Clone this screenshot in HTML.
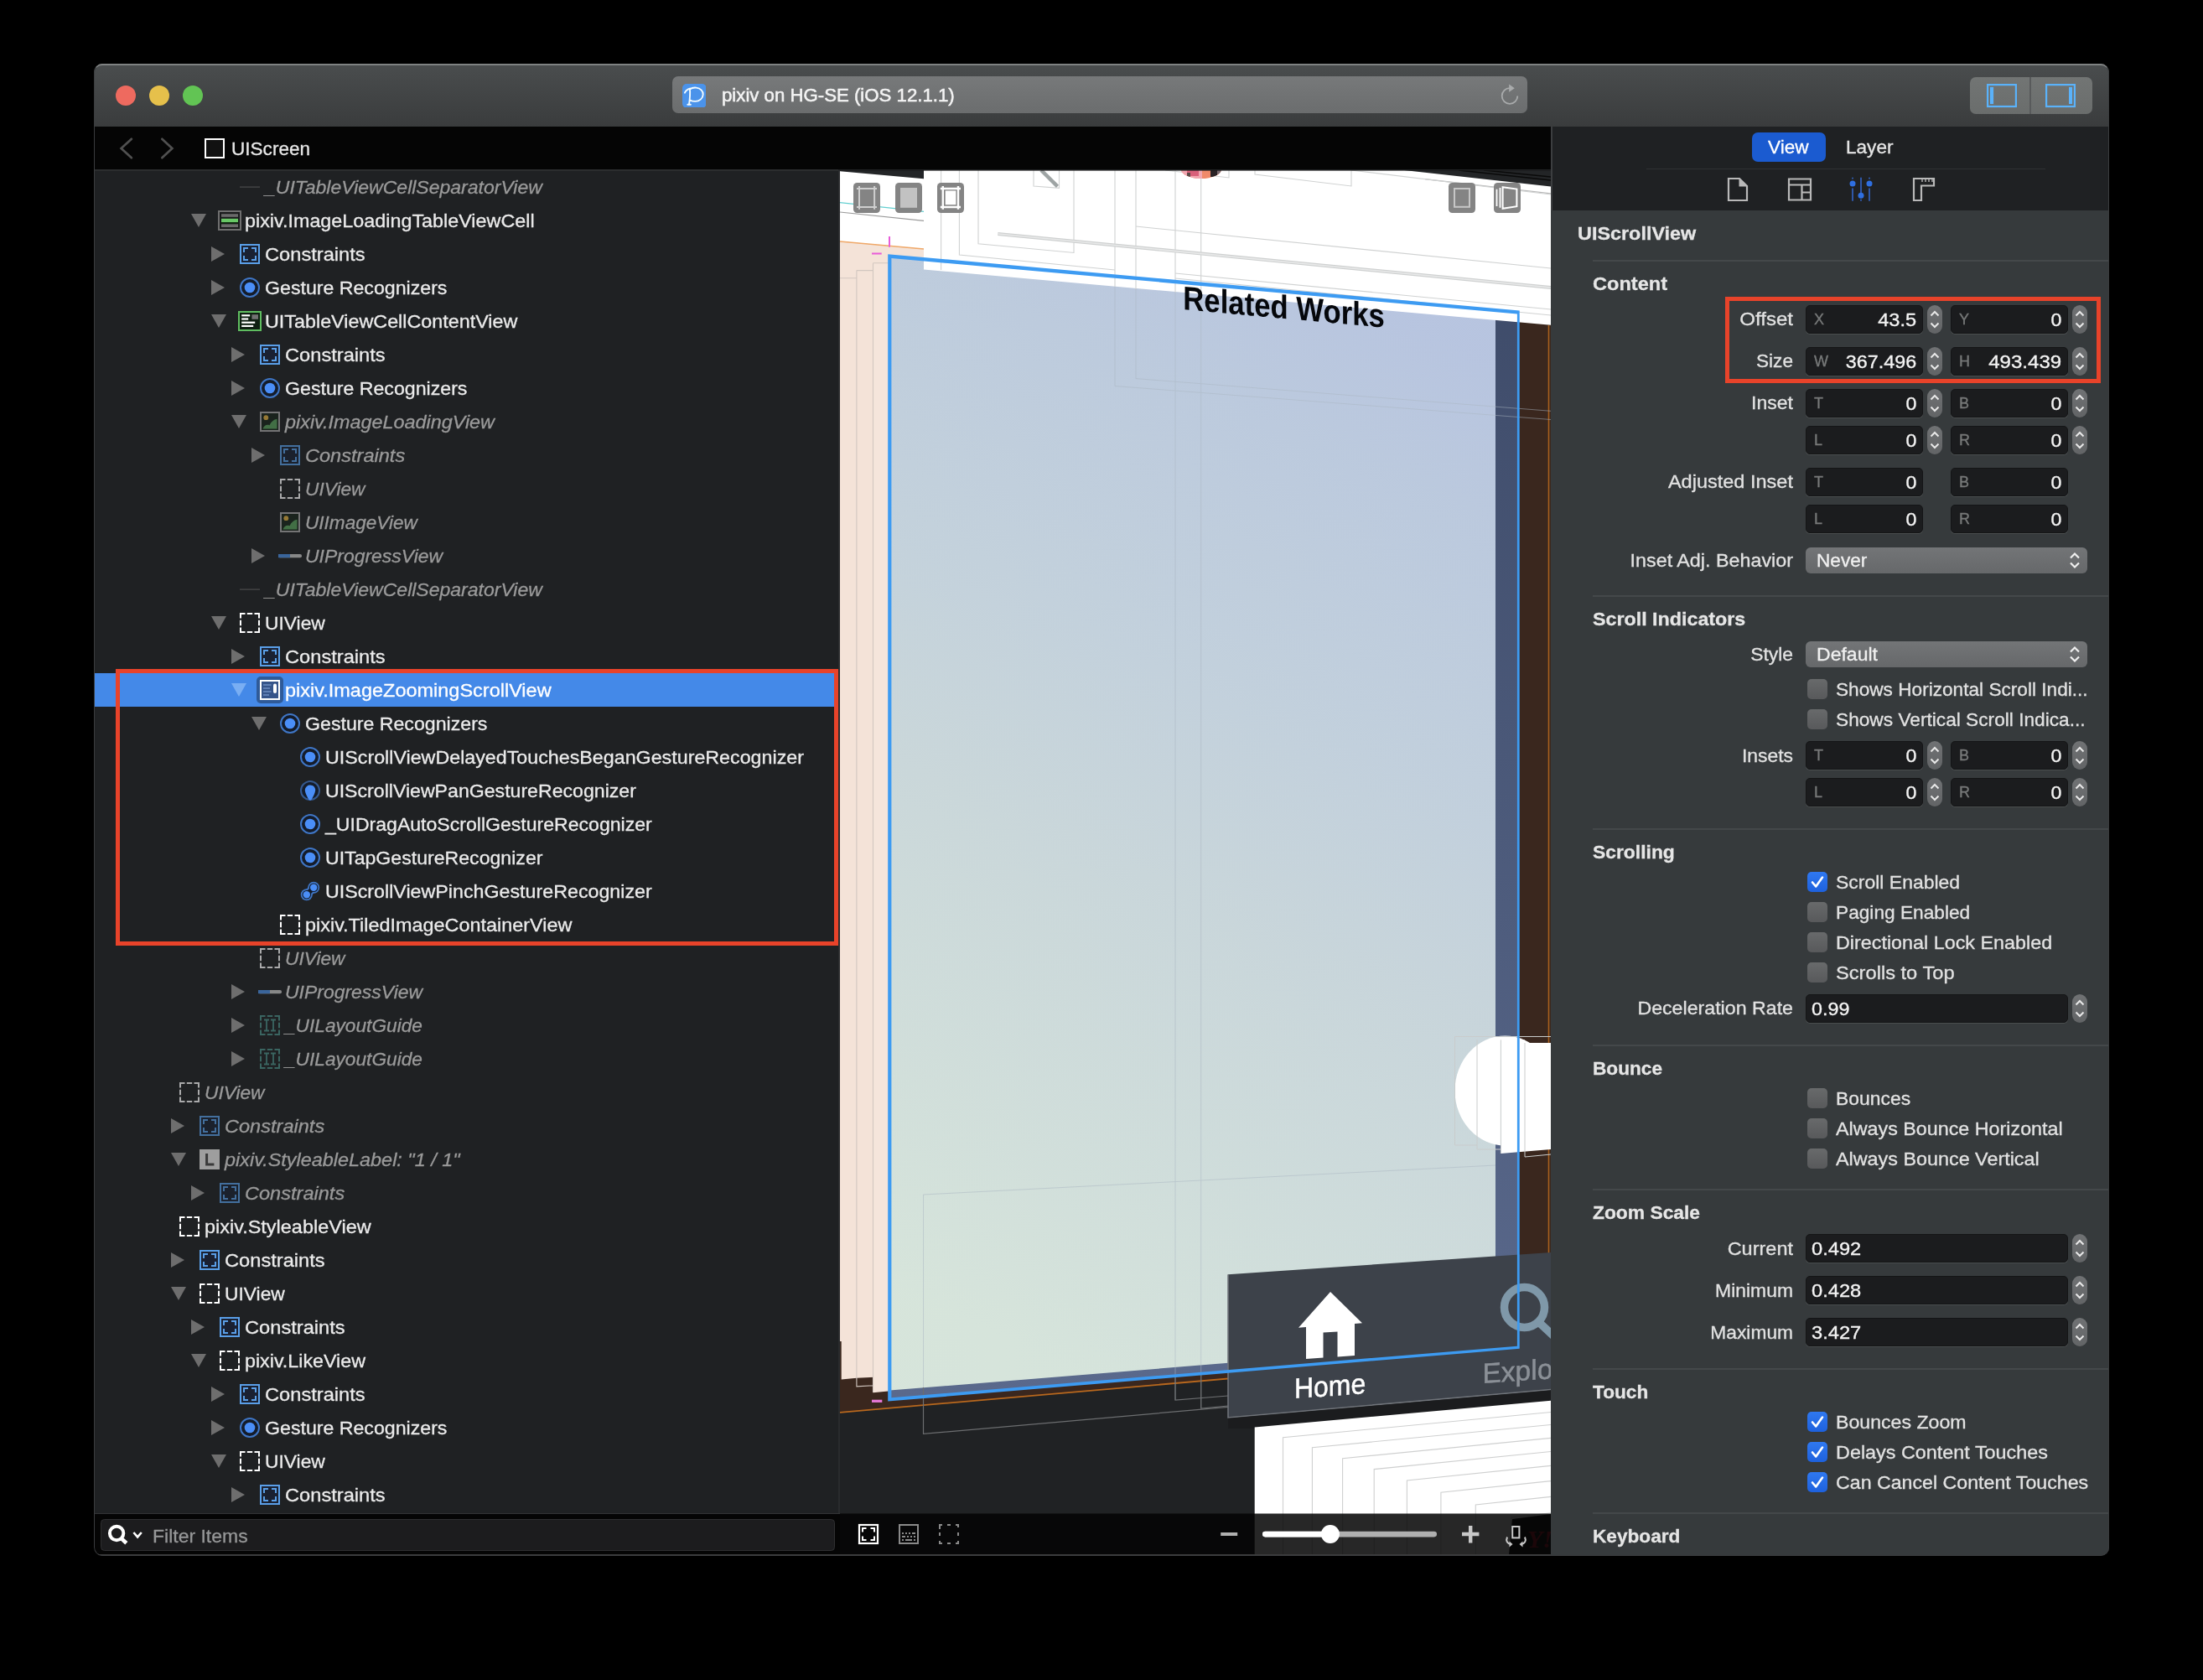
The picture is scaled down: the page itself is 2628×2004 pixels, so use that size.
<!DOCTYPE html><html><head><meta charset="utf-8"><title>Reveal</title><style>
*{box-sizing:border-box;margin:0;padding:0}
html,body{width:2628px;height:2004px;background:#000;overflow:hidden}
body{font-family:"Liberation Sans",sans-serif;font-size:22.2px;color:#ebebeb;position:relative;-webkit-text-stroke:0.3px currentColor}
.abs{position:absolute}
#win{will-change:transform;position:absolute;left:112px;top:76px;width:2404px;height:1780px;border-radius:10px;overflow:hidden;background:#1f2123}
#pg{position:absolute;left:-112px;top:-76px;width:2628px;height:2004px}
.t{position:absolute;white-space:nowrap;line-height:40px;height:40px;margin-top:0.6px;transform:scaleX(1.045);transform-origin:0 50%}
.row{position:absolute;left:112px;width:889px;height:40px}
.it{font-style:italic;color:#9a9a9a}
.b{font-weight:bold}
.fld{position:absolute;height:34px;background:#1b1c1e;border:1px solid #141516;border-radius:5px;box-shadow:0 1px 0 rgba(255,255,255,.10)}
.fld .k{position:absolute;left:9px;top:0;line-height:33px;font-size:18px;color:#777979;-webkit-text-stroke:0.35px #777979}
.fld .v{position:absolute;right:7px;top:0;line-height:34px;font-size:22.2px;color:#f4f4f4;-webkit-text-stroke:0.35px #f4f4f4;transform:scaleX(1.045);transform-origin:100% 50%}
.fld .vl{position:absolute;left:6px;top:0;line-height:34px;font-size:22.2px;color:#f4f4f4;-webkit-text-stroke:0.35px #f4f4f4;transform:scaleX(1.045);transform-origin:0 50%}
.stp{position:absolute;width:18px;height:34px;border-radius:9px;background:linear-gradient(#707274,#626466)}
.lbl{margin-top:0.6px;position:absolute;white-space:nowrap;text-align:right;line-height:34px;height:34px;color:#e2e2e2;transform:scaleX(1.045);transform-origin:100% 50%}
.hd{margin-top:0.6px;position:absolute;white-space:nowrap;font-weight:bold;line-height:34px;height:34px;color:#e6e6e6;left:1900px;transform:scaleX(1.045);transform-origin:0 50%}
.sep{position:absolute;left:1900px;width:616px;height:2px;background:#44484a}
.cb{position:absolute;width:24px;height:24px;border-radius:5px;background:linear-gradient(#686a6b,#58595b);left:2156px}
.cb.on{background:linear-gradient(#2f78f0,#1e61dd)}
.cbl{margin-top:0.6px;position:absolute;white-space:nowrap;line-height:34px;height:34px;left:2190px;color:#e2e2e2;transform:scaleX(1.045);transform-origin:0 50%}
.pop{position:absolute;left:2154px;width:336px;height:31px;border-radius:6px;background:linear-gradient(#737577,#66686a);}
.pop span{position:absolute;left:13px;top:0;line-height:31px;color:#f0f0f0;transform:scaleX(1.045);transform-origin:0 50%}
</style></head><body>
<div id="win"><div id="pg">
<div class="abs" style="left:112px;top:76px;width:2404px;height:75px;background:linear-gradient(#4a4d4e,#3a3c3d)"></div>
<div class="abs" style="left:112px;top:76px;width:2404px;height:2px;background:rgba(255,255,255,.22)"></div>
<div class="abs" style="left:138px;top:102px;width:24px;height:24px;border-radius:12px;background:#ee6a5f"></div>
<div class="abs" style="left:178px;top:102px;width:24px;height:24px;border-radius:12px;background:#e6c04b"></div>
<div class="abs" style="left:218px;top:102px;width:24px;height:24px;border-radius:12px;background:#62c454"></div>
<div class="abs" style="left:802px;top:91px;width:1020px;height:44px;border-radius:7px;background:linear-gradient(#77797a,#6b6d6e)"></div>
<svg class="abs" style="left:813.8px;top:99.6px" width="28.6" height="28.6" viewBox="0 0 28.6 28.6"><rect width="28.6" height="28.6" rx="5" fill="#4b93ea"/><path d="M2.9 10.7 C4.3 7.6 6.6 6.2 8.9 5.7 C9.3 10 9.0 18 8.0 24.6 M6.3 24.8 H9.9 M8.9 6.6 C11 4.9 14 4.3 16.6 4.6 C21.6 5.2 24.9 8.5 24.7 12.7 C24.5 17.5 20.2 20.9 15.5 20.9 C12.8 20.9 10.6 20.3 8.8 19.2" fill="none" stroke="#f2fbff" stroke-width="1.9" stroke-linecap="round"/></svg>
<div class="t" style="left:860.5px;top:93.6px;font-size:21.25px;color:#f4f4f4;-webkit-text-stroke:0.5px #f4f4f4">pixiv on HG-SE (iOS 12.1.1)</div>
<svg class="abs" style="left:1786px;top:99px" width="30" height="30" viewBox="0 0 30 30"><path d="M15 6.2 A9.3 9.3 0 1 0 24.3 15.5" fill="none" stroke="#a9abac" stroke-width="1.8"/><path d="M14.2 1.6 L20.8 6.2 L14.2 10.8 Z" fill="#a9abac"/></svg>
<div class="abs" style="left:2350px;top:92px;width:146px;height:44px;border-radius:7px;background:linear-gradient(#727574,#6a6d6c)"></div>
<div class="abs" style="left:2421px;top:92px;width:2px;height:44px;background:#585a5b"></div>
<svg class="abs" style="left:2369px;top:100px" width="38" height="30" viewBox="0 0 38 30"><rect x="2.100" y="1.100" width="33.800" height="25.900" fill="none" stroke="#5ab2fa" stroke-width="2.2"/><rect x="5" y="3.900" width="4.100" height="20.200" fill="#5ab2fa"/></svg>
<svg class="abs" style="left:2439px;top:100px" width="38" height="30" viewBox="0 0 38 30"><rect x="2.100" y="1.100" width="33.800" height="25.900" fill="none" stroke="#5ab2fa" stroke-width="2.2"/><rect x="29" y="3.900" width="4.100" height="20.200" fill="#5ab2fa"/></svg>
<div class="abs" style="left:112px;top:151px;width:1739px;height:51px;background:#050505"></div>
<svg class="abs" style="left:140px;top:160px" width="80" height="34" viewBox="0 0 80 34"><path d="M16.9 5.8 L4.6 17 L16.900 28.200" fill="none" stroke="#505050" stroke-width="2.7" stroke-linecap="round"/><path d="M53.3 5.8 L65.4 17 L53.300 28.200" fill="none" stroke="#505050" stroke-width="2.7" stroke-linecap="round"/></svg>
<div class="abs" style="left:244px;top:165px;width:24px;height:24px;border:2.5px solid #fff;background:#111"></div>
<div class="t" style="left:276px;top:157px;color:#e8e8e8;font-size:21.6px">UIScreen</div>
<div class="abs" style="left:112px;top:202px;width:890px;height:1604px;background:#1f2123"></div>
<div class="abs" style="left:112px;top:202px;width:888px;height:1.6px;background:#2c2e2f"></div>
<div class="abs" style="left:999.5px;top:203px;width:2.5px;height:1602px;background:#292b2d"></div>
<div class="abs" style="left:286px;top:211.0px;width:24px;height:24px"><svg width="24" height="24" viewBox="0 0 24 24" style="opacity:0.62"><rect x="0" y="11.400" width="24" height="1.400" fill="#5c5c5c"/></svg></div>
<div class="t it" style="left:315.6px;top:203px;transform:scaleX(1.0372)">_UITableViewCellSeparatorView</div>
<svg class="abs" style="left:228px;top:254.5px" width="18" height="16" viewBox="0 0 18 16"><path d="M0 0 H18 L9 16 Z" fill="#6e6e6e"/></svg>
<div class="abs" style="left:260px;top:251.0px;width:28px;height:24px"><svg width="28" height="24" viewBox="0 0 28 24"><rect x="1" y="1" width="26" height="22" fill="#1a1b1c" stroke="#6f6f6f" stroke-width="2"/><rect x="4" y="4.200" width="20" height="3.6" fill="#6a6a6a"/><rect x="4" y="9.800" width="20" height="4.4" fill="#68c766"/><rect x="4" y="14.200" width="20" height="1.400" fill="#0c2a0c"/><rect x="4" y="16.4" width="20" height="3.6" fill="#6a6a6a"/></svg></div>
<div class="t" style="left:291.6px;top:243px;transform:scaleX(1.0521)">pixiv.ImageLoadingTableViewCell</div>
<svg class="abs" style="left:252px;top:294px" width="16" height="18" viewBox="0 0 16 18"><path d="M0 0 L16 9 L0 18 Z" fill="#6e6e6e"/></svg>
<div class="abs" style="left:286px;top:291.0px;width:24px;height:24px"><svg width="24" height="24" viewBox="0 0 24 24" style="opacity:1"><rect x="1" y="1" width="22" height="22" fill="#1a2132" stroke="#5a9fe8" stroke-width="2"/><path d="M5 10 V5 H10 M14 5 H19 V10 M19 14 V19 H14 M10 19 H5 V14" fill="none" stroke="#5a9fe8" stroke-width="2"/></svg></div>
<div class="t" style="left:315.6px;top:283px;transform:scaleX(1.0665)">Constraints</div>
<svg class="abs" style="left:252px;top:334px" width="16" height="18" viewBox="0 0 16 18"><path d="M0 0 L16 9 L0 18 Z" fill="#6e6e6e"/></svg>
<div class="abs" style="left:286px;top:331.0px;width:24px;height:24px"><svg width="24" height="24" viewBox="0 0 24 24"><circle cx="12" cy="12" r="11" fill="#141c2a" stroke="#3f76c6" stroke-width="2"/><circle cx="12" cy="12" r="6.3" fill="#4a8ef7"/></svg></div>
<div class="t" style="left:315.6px;top:323px;transform:scaleX(1.0432)">Gesture Recognizers</div>
<svg class="abs" style="left:252px;top:374.5px" width="18" height="16" viewBox="0 0 18 16"><path d="M0 0 H18 L9 16 Z" fill="#6e6e6e"/></svg>
<div class="abs" style="left:284px;top:371.0px;width:28px;height:24px"><svg width="28" height="24" viewBox="0 0 28 24"><rect x="1" y="1" width="26" height="22" fill="#0f2012" stroke="#5fbd60" stroke-width="2"/><rect x="4.200" y="4.200" width="10" height="2.200" fill="#fff"/><rect x="4.200" y="8.400" width="8" height="2.200" fill="#fff"/><rect x="4.200" y="12.6" width="16" height="2.200" fill="#fff"/><rect x="4.200" y="16.8" width="14" height="2.200" fill="#fff"/><rect x="16.400" y="4.200" width="7.600" height="5.600" fill="#727272"/></svg></div>
<div class="t" style="left:315.6px;top:363px;transform:scaleX(1.0518)">UITableViewCellContentView</div>
<svg class="abs" style="left:276px;top:414px" width="16" height="18" viewBox="0 0 16 18"><path d="M0 0 L16 9 L0 18 Z" fill="#6e6e6e"/></svg>
<div class="abs" style="left:310px;top:411.0px;width:24px;height:24px"><svg width="24" height="24" viewBox="0 0 24 24" style="opacity:1"><rect x="1" y="1" width="22" height="22" fill="#1a2132" stroke="#5a9fe8" stroke-width="2"/><path d="M5 10 V5 H10 M14 5 H19 V10 M19 14 V19 H14 M10 19 H5 V14" fill="none" stroke="#5a9fe8" stroke-width="2"/></svg></div>
<div class="t" style="left:339.6px;top:403px;transform:scaleX(1.0665)">Constraints</div>
<svg class="abs" style="left:276px;top:454px" width="16" height="18" viewBox="0 0 16 18"><path d="M0 0 L16 9 L0 18 Z" fill="#6e6e6e"/></svg>
<div class="abs" style="left:310px;top:451.0px;width:24px;height:24px"><svg width="24" height="24" viewBox="0 0 24 24"><circle cx="12" cy="12" r="11" fill="#141c2a" stroke="#3f76c6" stroke-width="2"/><circle cx="12" cy="12" r="6.3" fill="#4a8ef7"/></svg></div>
<div class="t" style="left:339.6px;top:443px;transform:scaleX(1.0432)">Gesture Recognizers</div>
<svg class="abs" style="left:276px;top:494.5px" width="18" height="16" viewBox="0 0 18 16"><path d="M0 0 H18 L9 16 Z" fill="#6e6e6e"/></svg>
<div class="abs" style="left:310px;top:491.0px;width:24px;height:24px"><svg width="24" height="24" viewBox="0 0 24 24" style="opacity:0.62"><rect x="1" y="1" width="22" height="22" fill="#18251a" stroke="#a8a8a8" stroke-width="2"/><circle cx="7.3" cy="7.2" r="2.9" fill="#e0b040"/><path d="M3.5 20.5 C5 16.5 8 14.8 11.500 16.200 C13.5 12 16.5 9.5 20.5 8.8 V20.5 Z" fill="#58a05a"/></svg></div>
<div class="t it" style="left:339.6px;top:483px;transform:scaleX(1.0539)">pixiv.ImageLoadingView</div>
<svg class="abs" style="left:300px;top:534px" width="16" height="18" viewBox="0 0 16 18"><path d="M0 0 L16 9 L0 18 Z" fill="#6e6e6e"/></svg>
<div class="abs" style="left:334px;top:531.0px;width:24px;height:24px"><svg width="24" height="24" viewBox="0 0 24 24" style="opacity:0.62"><rect x="1" y="1" width="22" height="22" fill="#1a2132" stroke="#5a9fe8" stroke-width="2"/><path d="M5 10 V5 H10 M14 5 H19 V10 M19 14 V19 H14 M10 19 H5 V14" fill="none" stroke="#5a9fe8" stroke-width="2"/></svg></div>
<div class="t it" style="left:363.6px;top:523px;transform:scaleX(1.0621)">Constraints</div>
<div class="abs" style="left:334px;top:571.0px;width:24px;height:24px"><svg width="24" height="24" viewBox="0 0 24 24" style="opacity:0.62"><path d="M1 6.5 V1 H6.5 M8.800 1 H15.200 M17.500 1 H23 V6.500 M23 8.800 V15.200 M23 17.500 V23 H17.500 M15.200 23 H8.800 M6.500 23 H1 V17.500 M1 15.200 V8.800" fill="none" stroke="#fff" stroke-width="2"/></svg></div>
<div class="t it" style="left:363.6px;top:563px;transform:scaleX(1.0223)">UIView</div>
<div class="abs" style="left:334px;top:611.0px;width:24px;height:24px"><svg width="24" height="24" viewBox="0 0 24 24" style="opacity:0.62"><rect x="1" y="1" width="22" height="22" fill="#18251a" stroke="#a8a8a8" stroke-width="2"/><circle cx="7.3" cy="7.2" r="2.9" fill="#e0b040"/><path d="M3.5 20.5 C5 16.5 8 14.8 11.500 16.200 C13.5 12 16.5 9.5 20.5 8.8 V20.5 Z" fill="#58a05a"/></svg></div>
<div class="t it" style="left:363.6px;top:603px;transform:scaleX(1.0175)">UIImageView</div>
<svg class="abs" style="left:300px;top:654px" width="16" height="18" viewBox="0 0 16 18"><path d="M0 0 L16 9 L0 18 Z" fill="#6e6e6e"/></svg>
<div class="abs" style="left:332px;top:651.0px;width:28px;height:24px"><svg width="28" height="24" viewBox="0 0 28 24" style="opacity:0.85"><rect x="0" y="10" width="28" height="4.200" rx="2" fill="#9a9a9a"/><path d="M0 10 H14 V14.200 H0 Z" fill="#3f72b0"/></svg></div>
<div class="t it" style="left:363.6px;top:643px;transform:scaleX(1.0345)">UIProgressView</div>
<div class="abs" style="left:286px;top:691.0px;width:24px;height:24px"><svg width="24" height="24" viewBox="0 0 24 24" style="opacity:0.62"><rect x="0" y="11.400" width="24" height="1.400" fill="#5c5c5c"/></svg></div>
<div class="t it" style="left:315.6px;top:683px;transform:scaleX(1.0372)">_UITableViewCellSeparatorView</div>
<svg class="abs" style="left:252px;top:734.5px" width="18" height="16" viewBox="0 0 18 16"><path d="M0 0 H18 L9 16 Z" fill="#6e6e6e"/></svg>
<div class="abs" style="left:286px;top:731.0px;width:24px;height:24px"><svg width="24" height="24" viewBox="0 0 24 24" style="opacity:1"><path d="M1 6.5 V1 H6.5 M8.800 1 H15.200 M17.500 1 H23 V6.500 M23 8.800 V15.200 M23 17.500 V23 H17.500 M15.200 23 H8.800 M6.500 23 H1 V17.500 M1 15.200 V8.800" fill="none" stroke="#fff" stroke-width="2"/></svg></div>
<div class="t" style="left:315.6px;top:723px;transform:scaleX(1.0281)">UIView</div>
<svg class="abs" style="left:276px;top:774px" width="16" height="18" viewBox="0 0 16 18"><path d="M0 0 L16 9 L0 18 Z" fill="#6e6e6e"/></svg>
<div class="abs" style="left:310px;top:771.0px;width:24px;height:24px"><svg width="24" height="24" viewBox="0 0 24 24" style="opacity:1"><rect x="1" y="1" width="22" height="22" fill="#1a2132" stroke="#5a9fe8" stroke-width="2"/><path d="M5 10 V5 H10 M14 5 H19 V10 M19 14 V19 H14 M10 19 H5 V14" fill="none" stroke="#5a9fe8" stroke-width="2"/></svg></div>
<div class="t" style="left:339.6px;top:763px;transform:scaleX(1.0665)">Constraints</div>
<div class="abs" style="left:112px;top:803px;width:886px;height:40px;background:#4489e8"></div>
<svg class="abs" style="left:276px;top:814.5px" width="18" height="16" viewBox="0 0 18 16"><path d="M0 0 H18 L9 16 Z" fill="#79aef3"/></svg>
<div class="abs" style="left:306px;top:807.0px;width:32px;height:32px"><svg width="32" height="32" viewBox="0 0 32 32"><rect x="0" y="0" width="32" height="32" rx="5" fill="#2f5a98"/><rect x="5" y="5" width="22" height="22" fill="#35548a" stroke="#fff" stroke-width="2"/><rect x="8" y="9" width="9.5" height="2" fill="#5f7fb4"/><rect x="8" y="13" width="8" height="2" fill="#5f7fb4"/><rect x="8" y="17" width="9.5" height="2" fill="#5f7fb4"/><rect x="8" y="21" width="7" height="2" fill="#5f7fb4"/><rect x="20" y="8.500" width="4" height="11.500" rx="2" fill="#fff"/></svg></div>
<div class="t" style="left:339.6px;top:803px;color:#fff;transform:scaleX(1.0585)">pixiv.ImageZoomingScrollView</div>
<svg class="abs" style="left:300px;top:854.5px" width="18" height="16" viewBox="0 0 18 16"><path d="M0 0 H18 L9 16 Z" fill="#6e6e6e"/></svg>
<div class="abs" style="left:334px;top:851.0px;width:24px;height:24px"><svg width="24" height="24" viewBox="0 0 24 24"><circle cx="12" cy="12" r="11" fill="#141c2a" stroke="#3f76c6" stroke-width="2"/><circle cx="12" cy="12" r="6.3" fill="#4a8ef7"/></svg></div>
<div class="t" style="left:363.6px;top:843px;transform:scaleX(1.0432)">Gesture Recognizers</div>
<div class="abs" style="left:358px;top:891.0px;width:24px;height:24px"><svg width="24" height="24" viewBox="0 0 24 24"><circle cx="12" cy="12" r="11" fill="#141c2a" stroke="#3f76c6" stroke-width="2"/><circle cx="12" cy="12" r="6.3" fill="#4a8ef7"/></svg></div>
<div class="t" style="left:387.6px;top:883px;transform:scaleX(1.0482)">UIScrollViewDelayedTouchesBeganGestureRecognizer</div>
<div class="abs" style="left:358px;top:931.0px;width:24px;height:24px"><svg width="24" height="24" viewBox="0 0 24 24"><circle cx="12" cy="12" r="11" fill="#141c2a" stroke="#35598f" stroke-width="2"/><path d="M12 5.6 C16 5.6 18.4 8.6 18.2 11.8 C18 15 15.5 19.5 13.8 22.6 C13 24 11 24 10.2 22.6 C8.5 19.5 6 15 5.8 11.8 C5.6 8.6 8 5.6 12 5.6 Z" fill="#4a8ef7"/></svg></div>
<div class="t" style="left:387.6px;top:923px;transform:scaleX(1.0419)">UIScrollViewPanGestureRecognizer</div>
<div class="abs" style="left:358px;top:971.0px;width:24px;height:24px"><svg width="24" height="24" viewBox="0 0 24 24"><circle cx="12" cy="12" r="11" fill="#141c2a" stroke="#3f76c6" stroke-width="2"/><circle cx="12" cy="12" r="6.3" fill="#4a8ef7"/></svg></div>
<div class="t" style="left:387.6px;top:963px;transform:scaleX(1.0397)">_UIDragAutoScrollGestureRecognizer</div>
<div class="abs" style="left:358px;top:1011.0px;width:24px;height:24px"><svg width="24" height="24" viewBox="0 0 24 24"><circle cx="12" cy="12" r="11" fill="#141c2a" stroke="#3f76c6" stroke-width="2"/><circle cx="12" cy="12" r="6.3" fill="#4a8ef7"/></svg></div>
<div class="t" style="left:387.6px;top:1003px;transform:scaleX(1.0415)">UITapGestureRecognizer</div>
<div class="abs" style="left:358px;top:1051.0px;width:24px;height:24px"><svg width="24" height="24" viewBox="0 0 24 24"><circle cx="16.2" cy="7.8" r="7" fill="#3f76c6"/><circle cx="7.8" cy="16.2" r="7" fill="#3f76c6"/><path d="M16.2 7.8 L7.8 16.2" stroke="#3f76c6" stroke-width="9.6"/><circle cx="16.2" cy="7.8" r="5.3" fill="#141c2a"/><circle cx="7.8" cy="16.2" r="5.3" fill="#141c2a"/><path d="M16.2 7.8 L7.8 16.2" stroke="#141c2a" stroke-width="5.6"/><circle cx="16.2" cy="7.8" r="4.2" fill="#4a8ef7"/><circle cx="7.8" cy="16.200" r="4.2" fill="#4a8ef7"/></svg></div>
<div class="t" style="left:387.6px;top:1043px;transform:scaleX(1.0477)">UIScrollViewPinchGestureRecognizer</div>
<div class="abs" style="left:334px;top:1091.0px;width:24px;height:24px"><svg width="24" height="24" viewBox="0 0 24 24" style="opacity:1"><path d="M1 6.5 V1 H6.5 M8.800 1 H15.200 M17.500 1 H23 V6.500 M23 8.800 V15.200 M23 17.500 V23 H17.500 M15.200 23 H8.800 M6.500 23 H1 V17.500 M1 15.200 V8.800" fill="none" stroke="#fff" stroke-width="2"/></svg></div>
<div class="t" style="left:363.6px;top:1083px;transform:scaleX(1.0553)">pixiv.TiledImageContainerView</div>
<div class="abs" style="left:310px;top:1131.0px;width:24px;height:24px"><svg width="24" height="24" viewBox="0 0 24 24" style="opacity:0.62"><path d="M1 6.5 V1 H6.5 M8.800 1 H15.200 M17.500 1 H23 V6.500 M23 8.800 V15.200 M23 17.500 V23 H17.500 M15.200 23 H8.800 M6.500 23 H1 V17.500 M1 15.200 V8.800" fill="none" stroke="#fff" stroke-width="2"/></svg></div>
<div class="t it" style="left:339.6px;top:1123px;transform:scaleX(1.0223)">UIView</div>
<svg class="abs" style="left:276px;top:1174px" width="16" height="18" viewBox="0 0 16 18"><path d="M0 0 L16 9 L0 18 Z" fill="#6e6e6e"/></svg>
<div class="abs" style="left:308px;top:1171.0px;width:28px;height:24px"><svg width="28" height="24" viewBox="0 0 28 24" style="opacity:0.85"><rect x="0" y="10" width="28" height="4.200" rx="2" fill="#9a9a9a"/><path d="M0 10 H14 V14.200 H0 Z" fill="#3f72b0"/></svg></div>
<div class="t it" style="left:339.6px;top:1163px;transform:scaleX(1.0345)">UIProgressView</div>
<svg class="abs" style="left:276px;top:1214px" width="16" height="18" viewBox="0 0 16 18"><path d="M0 0 L16 9 L0 18 Z" fill="#6e6e6e"/></svg>
<div class="abs" style="left:310px;top:1211.0px;width:24px;height:24px"><svg width="24" height="24" viewBox="0 0 24 24" style="opacity:0.62"><path d="M1 6.5 V1 H6.5 M8.800 1 H15.200 M17.500 1 H23 V6.500 M23 8.800 V15.200 M23 17.500 V23 H17.500 M15.200 23 H8.800 M6.500 23 H1 V17.500 M1 15.200 V8.800" fill="none" stroke="#4c8f88" stroke-width="2"/><path d="M5 5.500 H11 M8 5.500 V18.500 M5 18.500 H11 M13 5.500 H19 M16 5.500 V18.500 M13 18.500 H19" fill="none" stroke="#4c8f88" stroke-width="1.800"/></svg></div>
<div class="t it" style="left:339.6px;top:1203px;transform:scaleX(1.0224)">_UILayoutGuide</div>
<svg class="abs" style="left:276px;top:1254px" width="16" height="18" viewBox="0 0 16 18"><path d="M0 0 L16 9 L0 18 Z" fill="#6e6e6e"/></svg>
<div class="abs" style="left:310px;top:1251.0px;width:24px;height:24px"><svg width="24" height="24" viewBox="0 0 24 24" style="opacity:0.62"><path d="M1 6.5 V1 H6.5 M8.800 1 H15.200 M17.500 1 H23 V6.500 M23 8.800 V15.200 M23 17.500 V23 H17.500 M15.200 23 H8.800 M6.500 23 H1 V17.500 M1 15.200 V8.800" fill="none" stroke="#4c8f88" stroke-width="2"/><path d="M5 5.500 H11 M8 5.500 V18.500 M5 18.500 H11 M13 5.500 H19 M16 5.500 V18.500 M13 18.500 H19" fill="none" stroke="#4c8f88" stroke-width="1.800"/></svg></div>
<div class="t it" style="left:339.6px;top:1243px;transform:scaleX(1.0224)">_UILayoutGuide</div>
<div class="abs" style="left:214px;top:1291.0px;width:24px;height:24px"><svg width="24" height="24" viewBox="0 0 24 24" style="opacity:0.62"><path d="M1 6.5 V1 H6.5 M8.800 1 H15.200 M17.500 1 H23 V6.500 M23 8.800 V15.200 M23 17.500 V23 H17.500 M15.200 23 H8.800 M6.500 23 H1 V17.500 M1 15.200 V8.800" fill="none" stroke="#fff" stroke-width="2"/></svg></div>
<div class="t it" style="left:243.60000000000002px;top:1283px;transform:scaleX(1.0223)">UIView</div>
<svg class="abs" style="left:204px;top:1334px" width="16" height="18" viewBox="0 0 16 18"><path d="M0 0 L16 9 L0 18 Z" fill="#6e6e6e"/></svg>
<div class="abs" style="left:238px;top:1331.0px;width:24px;height:24px"><svg width="24" height="24" viewBox="0 0 24 24" style="opacity:0.62"><rect x="1" y="1" width="22" height="22" fill="#1a2132" stroke="#5a9fe8" stroke-width="2"/><path d="M5 10 V5 H10 M14 5 H19 V10 M19 14 V19 H14 M10 19 H5 V14" fill="none" stroke="#5a9fe8" stroke-width="2"/></svg></div>
<div class="t it" style="left:267.6px;top:1323px;transform:scaleX(1.0621)">Constraints</div>
<svg class="abs" style="left:204px;top:1374.5px" width="18" height="16" viewBox="0 0 18 16"><path d="M0 0 H18 L9 16 Z" fill="#6e6e6e"/></svg>
<div class="abs" style="left:238px;top:1371.0px;width:24px;height:24px"><svg width="24" height="24" viewBox="0 0 24 24" style="opacity:1"><rect width="24" height="24" fill="#9e9e9e"/><path d="M8.600 5 V18 H17.400" fill="none" stroke="#3a3a3a" stroke-width="3"/></svg></div>
<div class="t it" style="left:267.6px;top:1363px;transform:scaleX(1.0560)">pixiv.StyleableLabel: "1 / 1"</div>
<svg class="abs" style="left:228px;top:1414px" width="16" height="18" viewBox="0 0 16 18"><path d="M0 0 L16 9 L0 18 Z" fill="#6e6e6e"/></svg>
<div class="abs" style="left:262px;top:1411.0px;width:24px;height:24px"><svg width="24" height="24" viewBox="0 0 24 24" style="opacity:0.62"><rect x="1" y="1" width="22" height="22" fill="#1a2132" stroke="#5a9fe8" stroke-width="2"/><path d="M5 10 V5 H10 M14 5 H19 V10 M19 14 V19 H14 M10 19 H5 V14" fill="none" stroke="#5a9fe8" stroke-width="2"/></svg></div>
<div class="t it" style="left:291.6px;top:1403px;transform:scaleX(1.0621)">Constraints</div>
<div class="abs" style="left:214px;top:1451.0px;width:24px;height:24px"><svg width="24" height="24" viewBox="0 0 24 24" style="opacity:1"><path d="M1 6.5 V1 H6.5 M8.800 1 H15.200 M17.500 1 H23 V6.500 M23 8.800 V15.200 M23 17.500 V23 H17.500 M15.200 23 H8.800 M6.500 23 H1 V17.500 M1 15.200 V8.800" fill="none" stroke="#fff" stroke-width="2"/></svg></div>
<div class="t" style="left:243.60000000000002px;top:1443px;transform:scaleX(1.0573)">pixiv.StyleableView</div>
<svg class="abs" style="left:204px;top:1494px" width="16" height="18" viewBox="0 0 16 18"><path d="M0 0 L16 9 L0 18 Z" fill="#6e6e6e"/></svg>
<div class="abs" style="left:238px;top:1491.0px;width:24px;height:24px"><svg width="24" height="24" viewBox="0 0 24 24" style="opacity:1"><rect x="1" y="1" width="22" height="22" fill="#1a2132" stroke="#5a9fe8" stroke-width="2"/><path d="M5 10 V5 H10 M14 5 H19 V10 M19 14 V19 H14 M10 19 H5 V14" fill="none" stroke="#5a9fe8" stroke-width="2"/></svg></div>
<div class="t" style="left:267.6px;top:1483px;transform:scaleX(1.0665)">Constraints</div>
<svg class="abs" style="left:204px;top:1534.5px" width="18" height="16" viewBox="0 0 18 16"><path d="M0 0 H18 L9 16 Z" fill="#6e6e6e"/></svg>
<div class="abs" style="left:238px;top:1531.0px;width:24px;height:24px"><svg width="24" height="24" viewBox="0 0 24 24" style="opacity:1"><path d="M1 6.5 V1 H6.5 M8.800 1 H15.200 M17.500 1 H23 V6.500 M23 8.800 V15.200 M23 17.500 V23 H17.500 M15.200 23 H8.800 M6.500 23 H1 V17.500 M1 15.200 V8.800" fill="none" stroke="#fff" stroke-width="2"/></svg></div>
<div class="t" style="left:267.6px;top:1523px;transform:scaleX(1.0281)">UIView</div>
<svg class="abs" style="left:228px;top:1574px" width="16" height="18" viewBox="0 0 16 18"><path d="M0 0 L16 9 L0 18 Z" fill="#6e6e6e"/></svg>
<div class="abs" style="left:262px;top:1571.0px;width:24px;height:24px"><svg width="24" height="24" viewBox="0 0 24 24" style="opacity:1"><rect x="1" y="1" width="22" height="22" fill="#1a2132" stroke="#5a9fe8" stroke-width="2"/><path d="M5 10 V5 H10 M14 5 H19 V10 M19 14 V19 H14 M10 19 H5 V14" fill="none" stroke="#5a9fe8" stroke-width="2"/></svg></div>
<div class="t" style="left:291.6px;top:1563px;transform:scaleX(1.0665)">Constraints</div>
<svg class="abs" style="left:228px;top:1614.5px" width="18" height="16" viewBox="0 0 18 16"><path d="M0 0 H18 L9 16 Z" fill="#6e6e6e"/></svg>
<div class="abs" style="left:262px;top:1611.0px;width:24px;height:24px"><svg width="24" height="24" viewBox="0 0 24 24" style="opacity:1"><path d="M1 6.5 V1 H6.5 M8.800 1 H15.200 M17.500 1 H23 V6.500 M23 8.800 V15.200 M23 17.500 V23 H17.500 M15.200 23 H8.800 M6.500 23 H1 V17.500 M1 15.200 V8.800" fill="none" stroke="#fff" stroke-width="2"/></svg></div>
<div class="t" style="left:291.6px;top:1603px;transform:scaleX(1.0486)">pixiv.LikeView</div>
<svg class="abs" style="left:252px;top:1654px" width="16" height="18" viewBox="0 0 16 18"><path d="M0 0 L16 9 L0 18 Z" fill="#6e6e6e"/></svg>
<div class="abs" style="left:286px;top:1651.0px;width:24px;height:24px"><svg width="24" height="24" viewBox="0 0 24 24" style="opacity:1"><rect x="1" y="1" width="22" height="22" fill="#1a2132" stroke="#5a9fe8" stroke-width="2"/><path d="M5 10 V5 H10 M14 5 H19 V10 M19 14 V19 H14 M10 19 H5 V14" fill="none" stroke="#5a9fe8" stroke-width="2"/></svg></div>
<div class="t" style="left:315.6px;top:1643px;transform:scaleX(1.0665)">Constraints</div>
<svg class="abs" style="left:252px;top:1694px" width="16" height="18" viewBox="0 0 16 18"><path d="M0 0 L16 9 L0 18 Z" fill="#6e6e6e"/></svg>
<div class="abs" style="left:286px;top:1691.0px;width:24px;height:24px"><svg width="24" height="24" viewBox="0 0 24 24"><circle cx="12" cy="12" r="11" fill="#141c2a" stroke="#3f76c6" stroke-width="2"/><circle cx="12" cy="12" r="6.3" fill="#4a8ef7"/></svg></div>
<div class="t" style="left:315.6px;top:1683px;transform:scaleX(1.0432)">Gesture Recognizers</div>
<svg class="abs" style="left:252px;top:1734.5px" width="18" height="16" viewBox="0 0 18 16"><path d="M0 0 H18 L9 16 Z" fill="#6e6e6e"/></svg>
<div class="abs" style="left:286px;top:1731.0px;width:24px;height:24px"><svg width="24" height="24" viewBox="0 0 24 24" style="opacity:1"><path d="M1 6.5 V1 H6.5 M8.800 1 H15.200 M17.500 1 H23 V6.500 M23 8.800 V15.200 M23 17.500 V23 H17.500 M15.200 23 H8.800 M6.500 23 H1 V17.500 M1 15.200 V8.800" fill="none" stroke="#fff" stroke-width="2"/></svg></div>
<div class="t" style="left:315.6px;top:1723px;transform:scaleX(1.0281)">UIView</div>
<svg class="abs" style="left:276px;top:1774px" width="16" height="18" viewBox="0 0 16 18"><path d="M0 0 L16 9 L0 18 Z" fill="#6e6e6e"/></svg>
<div class="abs" style="left:310px;top:1771.0px;width:24px;height:24px"><svg width="24" height="24" viewBox="0 0 24 24" style="opacity:1"><rect x="1" y="1" width="22" height="22" fill="#1a2132" stroke="#5a9fe8" stroke-width="2"/><path d="M5 10 V5 H10 M14 5 H19 V10 M19 14 V19 H14 M10 19 H5 V14" fill="none" stroke="#5a9fe8" stroke-width="2"/></svg></div>
<div class="t" style="left:339.6px;top:1763px;transform:scaleX(1.0665)">Constraints</div>
<div class="abs" style="left:137.8px;top:798.4px;width:861.9px;height:330.1px;border:5.7px solid #e8432a"></div>
<div class="abs" style="left:112px;top:1805.5px;width:890px;height:50px;background:#050505"></div>
<div class="abs" style="left:112px;top:1854px;width:890px;height:1.5px;background:#3c3c3c"></div>
<div class="abs" style="left:120px;top:1812px;width:876px;height:38px;background:#1c1c1e;border:1.5px solid #2f2f31;border-radius:4.5px"></div>
<svg class="abs" style="left:128px;top:1817px" width="52" height="30" viewBox="0 0 52 30"><circle cx="11.1" cy="12" r="8.2" fill="none" stroke="#fff" stroke-width="4"/><path d="M17 18.400 L22.800 23.800" stroke="#fff" stroke-width="4.6" stroke-linecap="butt"/><path d="M31.4 11 L36.1 16.4 L40.800 11" fill="none" stroke="#fff" stroke-width="2.6"/></svg>
<div class="t" style="left:182px;top:1812.6px;color:#969798;font-size:22px">Filter Items</div>
<div class="abs" style="left:112px;top:1804.500px;width:890px;height:1.500px;background:#323436"></div>
<svg class="abs" style="left:1002px;top:203px" width="848" height="1652" viewBox="1002 203 848 1652" font-family="Liberation Sans, sans-serif">
<defs><linearGradient id="gfill" x1="0.62" y1="0" x2="0.38" y2="1"><stop offset="0" stop-color="#b8c5df"/><stop offset="0.14" stop-color="#bccadd"/><stop offset="0.36" stop-color="#c2d0dc"/><stop offset="0.56" stop-color="#c9d6da"/><stop offset="1" stop-color="#d6e4db"/></linearGradient><linearGradient id="gh" x1="0" y1="0" x2="1" y2="0"><stop offset="0" stop-color="#dfeed6" stop-opacity="0.05"/><stop offset="1" stop-color="#a8b8f0" stop-opacity="0.04"/></linearGradient><linearGradient id="gdb" x1="0" y1="0" x2="0" y2="1"><stop offset="0" stop-color="#3e4b69"/><stop offset="1" stop-color="#5a698c"/></linearGradient><clipPath id="cv"><rect x="1002" y="203" width="848" height="1652"/></clipPath></defs>
<g clip-path="url(#cv)">
<rect x="1002" y="203" width="848" height="1652" fill="#202224"/>
<polygon points="1002,203 1102,203 1102,297 1002,288" fill="#fff"/>
<polygon points="1002,203 1102,203 1102,213.3 1002,204.3" fill="#232527"/>
<line x1="1002" y1="241.6" x2="1102" y2="252.3" stroke="#62cfd0" stroke-width="1.2"/>
<line x1="1002" y1="253" x2="1102" y2="263.4" stroke="#9a9a9a" stroke-width="1.2"/>
<polygon points="1002,288 1850,367 1850,1611 1002,1684.800" fill="#3a271e"/>
<polygon points="1002,288 1102,297 1102,1640 1021.9,1643.700 1003.700,1645.500 1003.700,1600 1002,1600" fill="#f4e3d8"/>
<polygon points="1021.900,322.600 1041.500,322.600 1041.500,1641.700 1021.900,1642.900" fill="#f4e3d8"/>
<polygon points="1041.500,313.800 1062,313.800 1062,1659.300 1041.500,1661.300" fill="#f5e5db"/>
<path d="M1002 331.700 H1021.900 M1021.900 322.600 V1653.900 L1041.500 1652.700 M1021.900 322.600 H1041.500 M1041.500 313.800 V1661 M1041.500 313.800 H1060" fill="none" stroke="#d2c7c0" stroke-width="1.100"/>
<line x1="1002" y1="288" x2="1102" y2="297" stroke="#f0a868" stroke-width="1.600"/>
<line x1="1002" y1="1684.800" x2="1850" y2="1611" stroke="#b8681e" stroke-width="1.800"/>
<line x1="1847.5" y1="388" x2="1847.5" y2="1500" stroke="#a8601f" stroke-width="1.6"/>
<polygon points="1061.300,305.300 1811.300,372.100 1811.300,1607.200 1061.100,1669.500" fill="url(#gdb)"/>
<polygon points="1061.300,305.300 1784,369.700 1784,1600 1061.300,1658.600" fill="url(#gfill)"/>
<polygon points="1061.300,305.300 1784,369.700 1784,1600 1061.300,1658.600" fill="url(#gh)"/>
<g fill="none" stroke="#aab6c2" stroke-width="1" opacity="0.5">
<path d="M1402 340 V1670 M1432.7 340 V1680"/>
<path d="M1330 330 V460.500 L1850 500.500 M1355 330 V451.600 L1850 490.300"/>
<path d="M1101.5 1425 L1784 1390 M1101.5 1425 V1660"/>
</g>
<g fill="none" stroke="#6c6e70" stroke-width="1.2">
<path d="M1101.5 1655 V1710.4 L1465 1678.4"/>
<path d="M1402 1640 V1670.2 L1465 1665"/>
<path d="M1432.7 1640 V1680 L1465 1677"/>
</g>
<polygon points="1102,203 1850,203 1850,387.7 1102,321.4" fill="#fff"/>
<polygon points="1675,203 1850,203 1850,222.400" fill="#232527"/><path d="M1700 213.700 L1850 230.800" stroke="#b8b8b8" stroke-width="1.300"/><path d="M1740 203 L1850 215 M1770 203 L1850 211" stroke="#0a0a0a" stroke-width="1.500"/>
<g fill="none" stroke="#d0d2d2" stroke-width="1.1">
<path d="M1122.6 203 V322 M1144.4 203 V304 L1330 322 M1167 203 V290.8 L1281 301.5 V203"/>
<path d="M1233 203 V222 L1263.5 224.4 V203"/>
<path d="M1330 203 V342 M1355 203 V345 M1402 203 V349 M1432.7 203 V352"/>
<path d="M1355 270 L1850 320"/>
<path d="M1402 326 L1850 369 M1402 332 L1850 376"/>
<path d="M1390 203 L1466 212 V203 M1497 203 V208 L1612 222 V203 M1612 203 L1850 232"/>
</g>
<line x1="1190.3" y1="279" x2="1850" y2="343" stroke="#cfd1d1" stroke-width="4"/>
<line x1="1190.3" y1="279" x2="1850" y2="343" stroke="#e8e9e9" stroke-width="1.6"/>
<line x1="1242" y1="203" x2="1261.5" y2="222.4" stroke="#9ea4a4" stroke-width="4.5"/>
<clipPath id="av"><ellipse cx="1433" cy="202" rx="24" ry="11"/></clipPath>
<g clip-path="url(#av)"><rect x="1405" y="200" width="60" height="20" fill="#f08a6a"/><rect x="1405" y="200" width="29" height="20" fill="#f2a6b0"/><rect x="1416" y="203" width="14" height="7" fill="#d9607a"/><rect x="1444" y="200" width="8" height="11" fill="#2a2326"/><rect x="1452" y="200" width="8" height="8" fill="#7a6a70"/><rect x="1416" y="206" width="4" height="6" fill="#5a4a48"/></g>
<text transform="matrix(0.879 0.0791 0 1 1411.300 369.100)" font-size="39.5" font-weight="bold" fill="#05070b">Related Works</text>
<ellipse cx="1795.500" cy="1301" rx="60" ry="65.500" fill="#fff"/>
<polygon points="1790.4,1240.4 1819,1240.4 1819,1244 1850,1244 1850,1371 1790.4,1376" fill="#fff"/>
<g fill="none" stroke="#c9cccc" stroke-width="1"><path d="M1735.500 1236.500 H1850 M1735.500 1236.500 V1366 H1762 M1762 1240 V1371 H1790 M1790.400 1240.400 V1376 M1819 1244 V1380 L1850 1377"/></g>
<polygon points="1465,1520.3 1850,1494 1850,1657.5 1465,1691" fill="#3d424a"/>
<path d="M1465 1520.3 V1691 L1850 1657.5" fill="none" stroke="#70747a" stroke-width="1.6"/>
<g transform="matrix(1 -0.07 0 1 1587 1541)"><path d="M0 0 L38 40 H29 V78 H8.5 V48 H-8.5 V78 H-29 V40 H-38 Z" fill="#fff"/></g>
<text transform="matrix(0.94 -0.066 0 1 1544 1668)" font-size="34" fill="#fff" stroke="#fff" stroke-width="0.500">Home</text>
<text transform="matrix(1 -0.07 0 1 1768.500 1650)" font-size="33.500" fill="#8b9097" stroke="#8b9097" stroke-width="0.500">Explore</text>
<circle cx="1818.500" cy="1559.500" r="24" fill="none" stroke="#7f98a9" stroke-width="9.500"/>
<line x1="1835.500" y1="1577" x2="1856" y2="1596" stroke="#7f98a9" stroke-width="9.500"/>
<polygon points="1465,1692 1850,1658.500 1850,1672 1497.600,1704 1465,1704" fill="#1b1c1e"/>
<polygon points="1496.700,1702.600 1850,1670.700 1850,1855 1496.700,1855" fill="#fff"/>
<g fill="none" stroke="#cfd0d0" stroke-width="1.1">
<path d="M1530.5 1855 V1714.7 L1850 1684.5"/>
<path d="M1565.4 1855 V1726.8 L1850 1699.5"/>
<path d="M1601.6 1855 V1739.7 L1850 1715.4"/>
<path d="M1639.2 1855 V1752.6 L1850 1731.5"/>
<path d="M1678.4 1855 V1765.9 L1850 1748.4"/>
<path d="M1718.9 1855 V1780.2 L1850 1766.6"/>
<path d="M1760.3 1855 V1794.9 L1850 1785.4"/>
<path d="M1803.0 1855 V1810.0 L1850 1804.9"/>
</g>
<path fill-rule="evenodd" fill="#3d9bf2" d="M1059.200 303.200 L1812.700 370.600 L1812.700 1608.700 L1059.200 1671.600 Z M1063.400 308.100 L1063.400 1667.200 L1809.900 1605.700 L1809.900 374.400 Z"/>
<line x1="1061" y1="282" x2="1061" y2="294.7" stroke="#e85bd8" stroke-width="2"/>
<line x1="1040" y1="302.5" x2="1051.7" y2="302.5" stroke="#e85bd8" stroke-width="2"/>
<line x1="1040" y1="1671.300" x2="1052.300" y2="1671.300" stroke="#e878d8" stroke-width="3.200"/>
</g>
<rect x="1002" y="202" width="848" height="1.600" fill="#19191a"/>
<rect x="1018" y="218" width="32" height="36" rx="4.500" fill="#808080" fill-opacity="0.97"/>
<rect x="1068" y="218" width="32" height="36" rx="4.500" fill="#808080" fill-opacity="0.97"/>
<rect x="1118" y="218" width="32" height="36" rx="4.500" fill="#808080" fill-opacity="0.97"/>
<rect x="1728" y="218" width="32" height="36" rx="4.500" fill="#808080" fill-opacity="0.97"/>
<rect x="1782" y="218" width="32" height="36" rx="4.500" fill="#808080" fill-opacity="0.97"/>
<path d="M1022 225 H1046 M1022 247.100 H1046 M1025 222 V249.700 M1043.100 222 V249.700" stroke="#cfcfcf" stroke-width="2" fill="none"/>
<rect x="1074" y="224" width="20" height="23.800" fill="#c2c2c2"/>
<path d="M1121.800 225 H1146 M1121.800 247 H1146 M1124.800 222 V249.700 M1143 222 V249.700" stroke="#fff" stroke-width="2.400" fill="none"/><rect x="1127.700" y="227.500" width="12.700" height="16.700" fill="#fff"/>
<rect x="1735" y="225" width="18" height="21.800" fill="none" stroke="#c6c6c6" stroke-width="2"/>
<path d="M1785.500 225.700 V246 M1789.500 224 V247.800" stroke="#fff" stroke-width="1.800"/><path d="M1792.600 223.200 L1809.400 225.600 V246.200 L1792.600 248.800 Z" fill="none" stroke="#fff" stroke-width="2"/>
<polygon points="1804,1812 1850,1806 1850,1855 1800,1855" fill="#15171a"/><text x="1822" y="1846" font-size="30" font-style="italic" font-weight="bold" font-family="Liberation Serif, serif" fill="#b01830">Y!</text>
<rect x="1002" y="1805.500" width="848" height="49" fill="#040404" fill-opacity="0.86"/><rect x="1002" y="1854" width="848" height="1.500" fill="#3c3c3c"/>
<rect x="1025" y="1819" width="22" height="22" fill="none" stroke="#fff" stroke-width="2.200"/><path d="M1029 1827.500 V1823 H1033.500 M1038.500 1823 H1043 V1827.500 M1043 1832.500 V1837 H1038.500 M1033.500 1837 H1029 V1832.500" fill="none" stroke="#fff" stroke-width="2"/>
<rect x="1073" y="1819" width="22" height="22" fill="none" stroke="#8a8a8a" stroke-width="2"/><path d="M1076 1829 H1078 M1080 1829 H1082 M1084 1829 H1086 M1088 1829 H1092 M1076 1833 H1080 M1082 1833 H1084 M1086 1833 H1088 M1090 1833 H1092 M1076 1837 H1078 M1080 1837 H1088 M1090 1837 H1092" stroke="#8a8a8a" stroke-width="2"/>
<path d="M1121 1824 V1819 H1124 M1130 1819 H1134 M1140 1819 H1143 V1822 M1121 1828 V1832 M1143 1828 V1832 M1121 1838 V1841 H1124 M1130 1841 H1134 M1140 1841 H1143 V1838" fill="none" stroke="#8a8a8a" stroke-width="2"/>
<rect x="1456.200" y="1828" width="20" height="4" fill="#b0b0b0"/>
<rect x="1506" y="1826.700" width="208" height="6.700" rx="3.300" fill="#b0b0b0"/><rect x="1506" y="1826.700" width="82" height="6.700" rx="3.300" fill="#fff"/><circle cx="1586.900" cy="1830" r="11" fill="#fff"/>
<path d="M1744 1830 H1764.400 M1754.200 1820 V1840.400" stroke="#c8c8c8" stroke-width="4.400"/>
<rect x="1804.200" y="1821" width="8.200" height="13.400" fill="none" stroke="#c8c8c8" stroke-width="2"/><path d="M1798 1833.500 C1796 1838 1798 1841.500 1802.500 1842 M1819 1833.500 C1821 1838 1819 1841.500 1814.500 1842" fill="none" stroke="#c8c8c8" stroke-width="2"/><path d="M1800.500 1838.500 L1804.500 1842 L1800.500 1845.500 Z M1816.500 1838.500 L1812.500 1842 L1816.500 1845.500 Z" fill="#c8c8c8"/>
</svg>
<div class="abs" style="left:1850px;top:151px;width:666px;height:1705px;background:#363a3c"></div>
<div class="abs" style="left:1850px;top:151px;width:666px;height:100px;background:#1f2123"></div>
<div class="abs" style="left:1850px;top:151px;width:2px;height:100px;background:#3c3e40"></div>
<div class="abs" style="left:2090px;top:158px;width:88px;height:35px;border-radius:7px;background:#1b5bd0"></div>
<div class="t" style="left:2109px;top:155.5px;color:#fff;font-size:21.6px;-webkit-text-stroke:0.3px #fff">View</div>
<div class="t" style="left:2202px;top:155.5px;color:#e6e6e6;font-size:21.6px">Layer</div>
<div class="abs" style="left:1964px;top:201px;width:476px;height:1px;background:#303234"></div>
<svg class="abs" style="left:2060px;top:211px" width="26" height="30" viewBox="0 0 26 30"><path d="M2 2 H15 L24 11 V28 H2 Z" fill="none" stroke="#b9b9b9" stroke-width="2.2"/><path d="M14.500 2 V11.500 H24 Z" fill="#b9b9b9"/></svg>
<svg class="abs" style="left:2132px;top:211px" width="30" height="30" viewBox="0 0 30 30"><path d="M2 2.500 H28 V27.500 H2 Z M2 9.500 H28 M17.500 9.500 V27.500 M17.500 18.500 H28" fill="none" stroke="#b9b9b9" stroke-width="2.2"/></svg>
<svg class="abs" style="left:2205px;top:210px" width="30" height="32" viewBox="0 0 30 32"><path d="M5 1.800 V3.400 M5 14.600 V29.800 M15 1.800 V20.500 M15 27.800 V29.800 M25 1.800 V3.400 M25 14.600 V29.800" stroke="#2f57a6" stroke-width="2"/><circle cx="5" cy="9.100" r="3.500" fill="#2f6fe0"/><circle cx="15" cy="23.200" r="3.500" fill="#2f6fe0"/><circle cx="25" cy="9.100" r="3.500" fill="#2f6fe0"/></svg>
<svg class="abs" style="left:2281px;top:211px" width="28" height="30" viewBox="0 0 28 30"><path d="M2 2 H26 V10.500 H11 V28 H2 Z" fill="none" stroke="#b9b9b9" stroke-width="2.2"/><path d="M12 2 V6 M16 2 V6 M20 2 V6 M24 2 V6" stroke="#b9b9b9" stroke-width="1.400"/></svg>
<div class="hd" style="left:1882px;top:261px;transform:scaleX(1.0541)">UIScrollView</div>
<div class="sep" style="top:310px"></div>
<div class="hd" style="top:321px;transform:scaleX(1.0619)">Content</div>
<div class="lbl" style="left:1850px;width:289px;top:363.6px;transform:scaleX(1.0836)">Offset</div>
<div class="fld" style="left:2154px;top:363.6px;width:140px"><span class="k">X</span><span class="v" style="transform:scaleX(1.0640)">43.5</span></div>
<div class="fld" style="left:2327px;top:363.6px;width:140px"><span class="k">Y</span><span class="v" style="transform:scaleX(1.0450)">0</span></div>
<div class="stp" style="left:2299px;top:363.6px"><svg width="18" height="34" viewBox="0 0 18 34"><path d="M4.500 12.500 L9 8 L13.500 12.500 M4.500 21.500 L9 26 L13.500 21.500" fill="none" stroke="#e8e8e8" stroke-width="2"/></svg></div>
<div class="stp" style="left:2472px;top:363.6px"><svg width="18" height="34" viewBox="0 0 18 34"><path d="M4.500 12.500 L9 8 L13.500 12.500 M4.500 21.500 L9 26 L13.500 21.500" fill="none" stroke="#e8e8e8" stroke-width="2"/></svg></div>
<div class="lbl" style="left:1850px;width:289px;top:413.5px;transform:scaleX(1.0200)">Size</div>
<div class="fld" style="left:2154px;top:413.5px;width:140px"><span class="k">W</span><span class="v" style="transform:scaleX(1.0520)">367.496</span></div>
<div class="fld" style="left:2327px;top:413.5px;width:140px"><span class="k">H</span><span class="v" style="transform:scaleX(1.0850)">493.439</span></div>
<div class="stp" style="left:2299px;top:413.5px"><svg width="18" height="34" viewBox="0 0 18 34"><path d="M4.500 12.500 L9 8 L13.500 12.500 M4.500 21.500 L9 26 L13.500 21.500" fill="none" stroke="#e8e8e8" stroke-width="2"/></svg></div>
<div class="stp" style="left:2472px;top:413.5px"><svg width="18" height="34" viewBox="0 0 18 34"><path d="M4.500 12.500 L9 8 L13.500 12.500 M4.500 21.500 L9 26 L13.500 21.500" fill="none" stroke="#e8e8e8" stroke-width="2"/></svg></div>
<div class="lbl" style="left:1850px;width:289px;top:463.5px;transform:scaleX(1.0387)">Inset</div>
<div class="fld" style="left:2154px;top:463.5px;width:140px"><span class="k">T</span><span class="v" style="transform:scaleX(1.0450)">0</span></div>
<div class="fld" style="left:2327px;top:463.5px;width:140px"><span class="k">B</span><span class="v" style="transform:scaleX(1.0450)">0</span></div>
<div class="stp" style="left:2299px;top:463.5px"><svg width="18" height="34" viewBox="0 0 18 34"><path d="M4.500 12.500 L9 8 L13.500 12.500 M4.500 21.500 L9 26 L13.500 21.500" fill="none" stroke="#e8e8e8" stroke-width="2"/></svg></div>
<div class="stp" style="left:2472px;top:463.5px"><svg width="18" height="34" viewBox="0 0 18 34"><path d="M4.500 12.500 L9 8 L13.500 12.500 M4.500 21.500 L9 26 L13.500 21.500" fill="none" stroke="#e8e8e8" stroke-width="2"/></svg></div>
<div class="fld" style="left:2154px;top:507.5px;width:140px"><span class="k">L</span><span class="v" style="transform:scaleX(1.0450)">0</span></div>
<div class="fld" style="left:2327px;top:507.5px;width:140px"><span class="k">R</span><span class="v" style="transform:scaleX(1.0450)">0</span></div>
<div class="stp" style="left:2299px;top:507.5px"><svg width="18" height="34" viewBox="0 0 18 34"><path d="M4.500 12.500 L9 8 L13.500 12.500 M4.500 21.500 L9 26 L13.500 21.500" fill="none" stroke="#e8e8e8" stroke-width="2"/></svg></div>
<div class="stp" style="left:2472px;top:507.5px"><svg width="18" height="34" viewBox="0 0 18 34"><path d="M4.500 12.500 L9 8 L13.500 12.500 M4.500 21.500 L9 26 L13.500 21.500" fill="none" stroke="#e8e8e8" stroke-width="2"/></svg></div>
<div class="lbl" style="left:1850px;width:289px;top:557.5px;transform:scaleX(1.0602)">Adjusted Inset</div>
<div class="fld" style="left:2154px;top:557.5px;width:140px"><span class="k">T</span><span class="v" style="transform:scaleX(1.0450)">0</span></div>
<div class="fld" style="left:2327px;top:557.5px;width:140px"><span class="k">B</span><span class="v" style="transform:scaleX(1.0450)">0</span></div>
<div class="fld" style="left:2154px;top:601.5px;width:140px"><span class="k">L</span><span class="v" style="transform:scaleX(1.0450)">0</span></div>
<div class="fld" style="left:2327px;top:601.5px;width:140px"><span class="k">R</span><span class="v" style="transform:scaleX(1.0450)">0</span></div>
<div class="lbl" style="left:1850px;width:289px;top:651px;transform:scaleX(1.0509)">Inset Adj. Behavior</div>
<div class="pop" style="top:652.5px"><span style="transform:scaleX(1.0200)">Never</span><svg class="abs" style="right:7px;top:3px" width="16" height="25" viewBox="0 0 16 25"><path d="M3 9.500 L8 4.500 L13 9.500 M3 15.500 L8 20.500 L13 15.500" fill="none" stroke="#f0f0f0" stroke-width="2.200"/></svg></div>
<div class="sep" style="top:710px"></div>
<div class="hd" style="top:721px;transform:scaleX(1.0486)">Scroll Indicators</div>
<div class="lbl" style="left:1850px;width:289px;top:763px;transform:scaleX(1.0313)">Style</div>
<div class="pop" style="top:764.5px"><span style="transform:scaleX(1.0376)">Default</span><svg class="abs" style="right:7px;top:3px" width="16" height="25" viewBox="0 0 16 25"><path d="M3 9.500 L8 4.500 L13 9.500 M3 15.500 L8 20.500 L13 15.500" fill="none" stroke="#f0f0f0" stroke-width="2.200"/></svg></div>
<div class="cb" style="top:810px"></div>
<div class="cbl" style="top:805px;transform:scaleX(1.0200)">Shows Horizontal Scroll Indi...</div>
<div class="cb" style="top:846px"></div>
<div class="cbl" style="top:841px;transform:scaleX(1.0226)">Shows Vertical Scroll Indica...</div>
<div class="lbl" style="left:1850px;width:289px;top:884px;transform:scaleX(1.0322)">Insets</div>
<div class="fld" style="left:2154px;top:884px;width:140px"><span class="k">T</span><span class="v" style="transform:scaleX(1.0450)">0</span></div>
<div class="fld" style="left:2327px;top:884px;width:140px"><span class="k">B</span><span class="v" style="transform:scaleX(1.0450)">0</span></div>
<div class="stp" style="left:2299px;top:884px"><svg width="18" height="34" viewBox="0 0 18 34"><path d="M4.500 12.500 L9 8 L13.500 12.500 M4.500 21.500 L9 26 L13.500 21.500" fill="none" stroke="#e8e8e8" stroke-width="2"/></svg></div>
<div class="stp" style="left:2472px;top:884px"><svg width="18" height="34" viewBox="0 0 18 34"><path d="M4.500 12.500 L9 8 L13.500 12.500 M4.500 21.500 L9 26 L13.500 21.500" fill="none" stroke="#e8e8e8" stroke-width="2"/></svg></div>
<div class="fld" style="left:2154px;top:928px;width:140px"><span class="k">L</span><span class="v" style="transform:scaleX(1.0450)">0</span></div>
<div class="fld" style="left:2327px;top:928px;width:140px"><span class="k">R</span><span class="v" style="transform:scaleX(1.0450)">0</span></div>
<div class="stp" style="left:2299px;top:928px"><svg width="18" height="34" viewBox="0 0 18 34"><path d="M4.500 12.500 L9 8 L13.500 12.500 M4.500 21.500 L9 26 L13.500 21.500" fill="none" stroke="#e8e8e8" stroke-width="2"/></svg></div>
<div class="stp" style="left:2472px;top:928px"><svg width="18" height="34" viewBox="0 0 18 34"><path d="M4.500 12.500 L9 8 L13.500 12.500 M4.500 21.500 L9 26 L13.500 21.500" fill="none" stroke="#e8e8e8" stroke-width="2"/></svg></div>
<div class="sep" style="top:988px"></div>
<div class="hd" style="top:999px;transform:scaleX(1.0305)">Scrolling</div>
<div class="cb on" style="top:1040px"><svg width="24" height="24" viewBox="0 0 24 24"><path d="M6 12.500 L10.200 17.400 L18 6.500" fill="none" stroke="#fff" stroke-width="2.600" stroke-linecap="round" stroke-linejoin="round"/></svg></div>
<div class="cbl" style="top:1035px;transform:scaleX(1.0351)">Scroll Enabled</div>
<div class="cb" style="top:1076px"></div>
<div class="cbl" style="top:1071px;transform:scaleX(1.0227)">Paging Enabled</div>
<div class="cb" style="top:1112px"></div>
<div class="cbl" style="top:1107px;transform:scaleX(1.0517)">Directional Lock Enabled</div>
<div class="cb" style="top:1148px"></div>
<div class="cbl" style="top:1143px;transform:scaleX(1.0661)">Scrolls to Top</div>
<div class="lbl" style="left:1850px;width:289px;top:1185.5px;transform:scaleX(1.0451)">Deceleration Rate</div>
<div class="fld" style="left:2154px;top:1185.5px;width:313px"><span class="vl" style="transform:scaleX(1.0501)">0.99</span></div>
<div class="stp" style="left:2472px;top:1185.5px"><svg width="18" height="34" viewBox="0 0 18 34"><path d="M4.500 12.500 L9 8 L13.500 12.500 M4.500 21.500 L9 26 L13.500 21.500" fill="none" stroke="#e8e8e8" stroke-width="2"/></svg></div>
<div class="sep" style="top:1246px"></div>
<div class="hd" style="top:1257px;transform:scaleX(1.0200)">Bounce</div>
<div class="cb" style="top:1298px"></div>
<div class="cbl" style="top:1293px;transform:scaleX(1.0318)">Bounces</div>
<div class="cb" style="top:1334px"></div>
<div class="cbl" style="top:1329px;transform:scaleX(1.0502)">Always Bounce Horizontal</div>
<div class="cb" style="top:1370px"></div>
<div class="cbl" style="top:1365px;transform:scaleX(1.0523)">Always Bounce Vertical</div>
<div class="sep" style="top:1418px"></div>
<div class="hd" style="top:1429px;transform:scaleX(1.0280)">Zoom Scale</div>
<div class="lbl" style="left:1850px;width:289px;top:1472px;transform:scaleX(1.0590)">Current</div>
<div class="fld" style="left:2154px;top:1472px;width:313px"><span class="vl" style="transform:scaleX(1.0678)">0.492</span></div>
<div class="stp" style="left:2472px;top:1472px"><svg width="18" height="34" viewBox="0 0 18 34"><path d="M4.500 12.500 L9 8 L13.500 12.500 M4.500 21.500 L9 26 L13.500 21.500" fill="none" stroke="#e8e8e8" stroke-width="2"/></svg></div>
<div class="lbl" style="left:1850px;width:289px;top:1522px;transform:scaleX(1.0325)">Minimum</div>
<div class="fld" style="left:2154px;top:1522px;width:313px"><span class="vl" style="transform:scaleX(1.0678)">0.428</span></div>
<div class="stp" style="left:2472px;top:1522px"><svg width="18" height="34" viewBox="0 0 18 34"><path d="M4.500 12.500 L9 8 L13.500 12.500 M4.500 21.500 L9 26 L13.500 21.500" fill="none" stroke="#e8e8e8" stroke-width="2"/></svg></div>
<div class="lbl" style="left:1850px;width:289px;top:1572px;transform:scaleX(1.0258)">Maximum</div>
<div class="fld" style="left:2154px;top:1572px;width:313px"><span class="vl" style="transform:scaleX(1.0678)">3.427</span></div>
<div class="stp" style="left:2472px;top:1572px"><svg width="18" height="34" viewBox="0 0 18 34"><path d="M4.500 12.500 L9 8 L13.500 12.500 M4.500 21.500 L9 26 L13.500 21.500" fill="none" stroke="#e8e8e8" stroke-width="2"/></svg></div>
<div class="sep" style="top:1632px"></div>
<div class="hd" style="top:1643px;transform:scaleX(1.0200)">Touch</div>
<div class="cb on" style="top:1684px"><svg width="24" height="24" viewBox="0 0 24 24"><path d="M6 12.500 L10.200 17.400 L18 6.500" fill="none" stroke="#fff" stroke-width="2.600" stroke-linecap="round" stroke-linejoin="round"/></svg></div>
<div class="cbl" style="top:1679px;transform:scaleX(1.0428)">Bounces Zoom</div>
<div class="cb on" style="top:1720px"><svg width="24" height="24" viewBox="0 0 24 24"><path d="M6 12.500 L10.200 17.400 L18 6.500" fill="none" stroke="#fff" stroke-width="2.600" stroke-linecap="round" stroke-linejoin="round"/></svg></div>
<div class="cbl" style="top:1715px;transform:scaleX(1.0538)">Delays Content Touches</div>
<div class="cb on" style="top:1756px"><svg width="24" height="24" viewBox="0 0 24 24"><path d="M6 12.500 L10.200 17.400 L18 6.500" fill="none" stroke="#fff" stroke-width="2.600" stroke-linecap="round" stroke-linejoin="round"/></svg></div>
<div class="cbl" style="top:1751px;transform:scaleX(1.0450)">Can Cancel Content Touches</div>
<div class="sep" style="top:1804px"></div>
<div class="hd" style="top:1815px;transform:scaleX(1.0200)">Keyboard</div>
<div class="abs" style="left:2057.5px;top:353.5px;width:448px;height:103.5px;border:5.5px solid #e8432a"></div>
<div class="abs" style="left:112px;top:76px;width:2404px;height:1780px;border-radius:10px;border:1.600px solid #3a3c3e;border-top:2px solid #7f8282;pointer-events:none"></div>
</div></div></body></html>
